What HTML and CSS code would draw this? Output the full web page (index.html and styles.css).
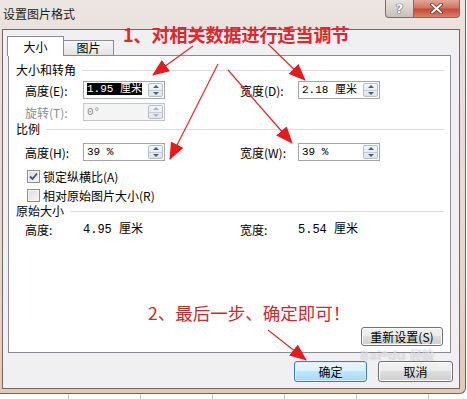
FILE: index.html
```html
<!DOCTYPE html>
<html lang="zh-CN">
<head>
    <meta charset="UTF-8">
    <meta name="viewport" content="width=device-width, initial-scale=1.0">
    <title>设置图片格式</title>
    <link rel="stylesheet" href="styles.css">
</head>
<body>

    <div class="window">
        <div class="titlebar">
            <span class="title">设置图片格式</span>
            <div class="caption-buttons">
                <span class="cap-btn cap-help">?</span>
                <span class="cap-btn cap-close">
                    <svg width="13" height="11" viewBox="0 0 13 11">
                        <path d="M2 1.5 L11 9.5 M11 1.5 L2 9.5" stroke="#5a3a34" stroke-width="3.6" stroke-linecap="round"/>
                        <path d="M2 1.5 L11 9.5 M11 1.5 L2 9.5" stroke="#fff" stroke-width="2" stroke-linecap="round"/>
                    </svg>
                </span>
            </div>
        </div>

        <div class="client">
            <div class="tabs">
                <span class="tab active">大小</span>
                <span class="tab">图片</span>
            </div>

            <div class="panel">
                <!-- 大小和转角 -->
                <div class="group-head">大小和转角</div>
                <div class="field-row first">
                    <label>高度(E):</label>
                    <div class="spin-box">
                        <span class="value"><span class="selected">1.95 厘米</span></span>
                        <span class="spinner"><i class="up"></i><i class="down"></i></span>
                    </div>
                    <span></span>
                    <label>宽度(D):</label>
                    <div class="spin-box">
                        <span class="value">2.18 厘米</span>
                        <span class="spinner"><i class="up"></i><i class="down"></i></span>
                    </div>
                </div>
                <div class="field-row disabled">
                    <label>旋转(T):</label>
                    <div class="spin-box">
                        <span class="value">0°</span>
                        <span class="spinner"><i class="up"></i><i class="down"></i></span>
                    </div>
                </div>

                <!-- 比例 -->
                <div class="group-head">比例</div>
                <div class="field-row scale">
                    <label>高度(H):</label>
                    <div class="spin-box">
                        <span class="value">39 %</span>
                        <span class="spinner"><i class="up"></i><i class="down"></i></span>
                    </div>
                    <span></span>
                    <label>宽度(W):</label>
                    <div class="spin-box">
                        <span class="value">39 %</span>
                        <span class="spinner"><i class="up"></i><i class="down"></i></span>
                    </div>
                </div>
                <div class="check-row first">
                    <span class="checkbox checked">
                        <svg width="11" height="11" viewBox="0 0 11 11"><path d="M2 5.5 L4.5 8 L9 2.5" fill="none" stroke="#3d4f80" stroke-width="1.8"/></svg>
                    </span>
                    锁定纵横比(A)
                </div>
                <div class="check-row">
                    <span class="checkbox"></span>
                    相对原始图片大小(R)
                </div>

                <!-- 原始大小 -->
                <div class="group-head">原始大小</div>
                <div class="field-row original">
                    <label>高度:</label>
                    <span class="num">4.95 厘米</span>
                    <span></span>
                    <label>宽度:</label>
                    <span class="num">5.54 厘米</span>
                </div>

                <button class="btn reset">重新设置(S)</button>
            </div>

            <div class="dialog-buttons">
                <button class="btn default">确定</button>
                <button class="btn">取消</button>
            </div>
        </div>

        <!-- annotations drawn over the dialog -->
        <div class="note note-1">1、对相关数据进行适当调节</div>
        <div class="note note-2">2、最后一步、确定即可！</div>
        <div class="watermark">Bai<span class="paw">●</span>du 经验</div>

        <svg class="arrows" width="467" height="399" viewBox="0 0 467 399">
            <defs>
                <marker id="head" markerUnits="userSpaceOnUse" markerWidth="17" markerHeight="14" refX="16" refY="7" orient="auto">
                    <path d="M0 0 L17 7 L0 14 Z" fill="#e8191c"/>
                </marker>
            </defs>
            <line x1="193" y1="46" x2="153" y2="75" marker-end="url(#head)"/>
            <line x1="268" y1="44" x2="305" y2="80" marker-end="url(#head)"/>
            <line x1="218" y1="64" x2="170" y2="159" marker-end="url(#head)"/>
            <line x1="228" y1="70" x2="292" y2="143" marker-end="url(#head)"/>
            <line x1="268" y1="330" x2="306" y2="360" marker-end="url(#head)"/>
        </svg>
    </div>

    <div class="desk"></div>

</body>
</html>
```

FILE: styles.css
```css
* {
    box-sizing: border-box;
}

body {
    margin: 0;
    width: 467px;
    height: 399px;
    overflow: hidden;
    background-color: #fff;
    font-family: "Noto Sans CJK SC", "Liberation Sans", sans-serif;
    font-size: 12px;
    color: #000;
}

/* Window frame */
.window {
    position: relative;
    width: 466px;
    height: 394px;
    padding: 0 5px 4px 2px;
    display: flex;
    flex-direction: column;
    background: linear-gradient(to bottom, #ece6e2 0, #e9e1dc 30px, #e6d6ca 70%, #e3c8b4 100%);
    border-right: 1px solid #75645c;
    border-bottom: 1px solid #75645c;
    border-bottom-right-radius: 6px;
}

.titlebar {
    height: 29px;
    display: flex;
    align-items: flex-start;
}

.title {
    padding-left: 1px;
    line-height: 28px;
    color: #1a1a1a;
}

.caption-buttons {
    margin-left: auto;
    display: flex;
}

.cap-btn {
    height: 18px;
    display: flex;
    align-items: center;
    justify-content: center;
    border: 1px solid #7d6e68;
    border-top: none;
}

.cap-help {
    width: 28px;
    border-bottom-left-radius: 4px;
    border-right: none;
    background: linear-gradient(to bottom, #e8e2df 0, #d9d1cd 50%, #c9bfba 100%);
    font-family: "DejaVu Sans", sans-serif;
    font-weight: bold;
    font-size: 13px;
    color: #fff;
    text-shadow: 0 0 1px #555, 0 0 1px #555, 0 0 1px #555;
}

.cap-close {
    width: 47px;
    border-bottom-right-radius: 4px;
    background: linear-gradient(to bottom, #e2a597 0, #d27462 45%, #c44d37 55%, #d8806a 100%);
}

/* Client area */
.client {
    height: 360px;
    width: 458px;
    border: 1px solid #6f6a68;
    background-color: #f0eff2;
    padding: 6px 0 0 5px;
}

.tabs {
    height: 19px;
    display: flex;
    align-items: flex-end;
    position: relative;
    z-index: 1;
}

.tab {
    position: relative;
    height: 15px;
    width: 51px;
    margin-left: -1px;
    border: 1px solid #898c95;
    border-bottom: none;
    background: linear-gradient(to bottom, #f7f7f7, #e3e3e3);
    text-align: center;
    line-height: 14px;
}

.tab.active {
    height: 20px;
    width: 57px;
    margin-bottom: -1px;
    background: #fff;
    line-height: 20px;
    z-index: 2;
}

.panel {
    width: 443px;
    height: 298px;
    border: 1px solid #898c95;
    background-color: #fff;
    padding: 6px 6px 6px 7px;
    display: flex;
    flex-direction: column;
}

.group-head {
    height: 16px;
    line-height: 16px;
    display: flex;
    align-items: center;
}

.group-head::after {
    content: "";
    flex: 1;
    margin-left: 6px;
    border-top: 1px solid #dcdcdc;
}

.field-row {
    display: grid;
    grid-template-columns: 58px 82px 75px 58px 82px;
    align-items: center;
    height: 18px;
    margin-left: 9px;
    margin-top: 4px;
}

.field-row.first {
    margin-top: 3px;
}

.field-row.scale {
    margin-top: 6px;
}

.field-row.original {
    margin-top: 2px;
    height: 16px;
}

.field-row.disabled label {
    color: #8d8d8d;
}

.spin-box {
    height: 18px;
    display: flex;
    border: 1px solid #a3a7ad;
    background-color: #fff;
    padding-left: 3px;
}

.value, .num {
    font-family: "Liberation Mono", "Noto Sans CJK SC", monospace;
    font-size: 11px;
    line-height: 16px;
    white-space: nowrap;
}

.num {
    font-size: 12px;
}

.value {
    flex: 1;
    overflow: hidden;
}

.selected {
    display: inline-block;
    background-color: #000;
    color: #fff;
    line-height: 12px;
    vertical-align: 1px;
}

.spinner {
    width: 15px;
    flex: none;
    margin: 1px 1px 1px 0;
    display: flex;
    flex-direction: column;
    border: 1px solid #b5bfca;
    border-radius: 2px;
    background: linear-gradient(to bottom, #f3f6f9, #dde4ec);
}

.spinner i {
    flex: 1;
    display: flex;
    align-items: center;
    justify-content: center;
}

.spinner i.up {
    border-bottom: 1px solid #c4ccd5;
}

.spinner i::after {
    content: "";
    border-left: 3px solid transparent;
    border-right: 3px solid transparent;
}

.spinner i.up::after {
    border-bottom: 3px solid #4c5d78;
}

.spinner i.down::after {
    border-top: 3px solid #4c5d78;
}

.disabled .spin-box {
    background-color: #f4f4f4;
    border-color: #c4c6ca;
}

.disabled .value {
    color: #8d8d8d;
}

.disabled .spinner i.up::after {
    border-bottom-color: #a9b1bd;
}

.disabled .spinner i.down::after {
    border-top-color: #a9b1bd;
}

/* Checkboxes */
.check-row {
    height: 16px;
    margin-left: 11px;
    margin-top: 3px;
    display: flex;
    align-items: center;
    gap: 3px;
}

.check-row.first {
    margin-top: 7px;
}

.checkbox {
    width: 13px;
    height: 13px;
    border: 1px solid #8e8f8f;
    background: linear-gradient(135deg, #dcdcdc, #f6f6f6);
    box-shadow: inset 0 0 0 1px #f4f4f4;
    display: flex;
    align-items: center;
    justify-content: center;
}

/* Buttons */
.btn {
    font-family: "Noto Sans CJK SC", "Liberation Sans", sans-serif;
    font-size: 12px;
    color: #000;
    padding: 0;
    border: 1px solid #707070;
    border-radius: 3px;
    background: linear-gradient(to bottom, #f2f2f2 0, #ebebeb 50%, #dddddd 50%, #cfcfcf 100%);
    box-shadow: inset 0 0 0 1px #fcfcfc;
    line-height: 17px;
}

.btn.reset {
    margin-top: auto;
    align-self: flex-end;
    margin-right: 1px;
    width: 82px;
    height: 19px;
}

.dialog-buttons {
    display: flex;
    justify-content: flex-end;
    gap: 11px;
    margin-top: 8px;
    padding-right: 6px;
}

.dialog-buttons .btn {
    width: 75px;
    height: 21px;
}

.dialog-buttons .btn.default {
    width: 73px;
    border-color: #3c7fb1;
    background: linear-gradient(to bottom, #eaf6fd 0, #d9f0fc 50%, #bee6fd 50%, #a7d9f5 100%);
    box-shadow: inset 0 0 0 1px #d8eefa;
}

/* Annotations */
.note {
    position: absolute;
    white-space: nowrap;
    line-height: 20px;
}

.note-1 {
    left: 123px;
    top: 24px;
    font-size: 18px;
    font-weight: bold;
    color: #e3262a;
}

.note-2 {
    left: 148px;
    top: 303px;
    font-size: 17.5px;
    color: #cc2a2c;
}

/* faint site watermark between the reset and dialog buttons */
.watermark {
    position: absolute;
    left: 360px;
    top: 347px;
    font-family: "DejaVu Sans", sans-serif;
    font-weight: bold;
    font-size: 12px;
    line-height: 13px;
    color: rgba(255, 255, 255, 0.55);
    text-shadow: 0 0 1px rgba(110, 110, 130, 0.45);
    white-space: nowrap;
}

.watermark .paw {
    font-size: 8px;
    vertical-align: 4px;
}

.arrows {
    position: absolute;
    left: 0;
    top: 0;
    pointer-events: none;
}

.arrows line {
    stroke: #e22a2c;
    stroke-width: 1.2;
}

/* page underneath the dialog */
.desk {
    height: 5px;
    background: repeating-linear-gradient(to right, #fff 0, #fff 68px, #c9c9c9 68px, #c9c9c9 69px, #fff 69px, #fff 72px);
}
```
